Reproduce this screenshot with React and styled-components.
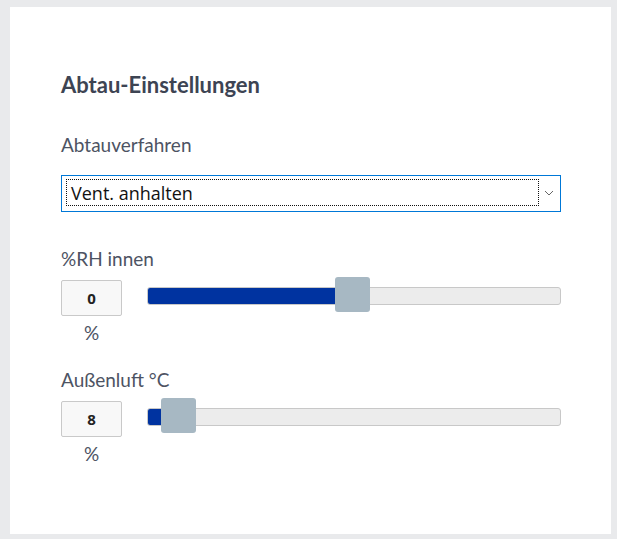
import styled, { createGlobalStyle } from "styled-components";

const GlobalStyle = createGlobalStyle`
  html, body {
    margin: 0;
    padding: 0;
    background: #e9eaec;
  }
  body {
    font-family: "Lato", "Noto Sans", sans-serif;
  }
`;

const Page = styled.div`
  width: 617px;
  height: 539px;
  padding: 7px 6px 5px 10px;
  box-sizing: border-box;
`;

const Card = styled.section`
  height: 100%;
  background: #fff;
  padding: 64px 50px 0 51px;
  box-sizing: border-box;
`;

const Title = styled.h2`
  margin: 0 0 35px;
  font-family: "Lato", sans-serif;
  font-size: 22px;
  line-height: 28px;
  font-weight: 700;
  color: #3d4453;
`;

const Label = styled.div`
  font-size: 19px;
  line-height: 22px;
  color: #4d5363;
  margin-bottom: ${(p) => p.gap || 8}px;
`;

const SelectBox = styled.div`
  display: flex;
  align-items: center;
  height: 37px;
  border: 1px solid #0078d7;
  padding: 3px 1px 5px 4px;
  box-sizing: border-box;
  margin-bottom: 36px;
`;

const FocusRing = styled.div`
  flex: 1;
  height: 100%;
  border: 1px dotted #111;
  box-sizing: border-box;
  display: flex;
  align-items: center;
  padding-left: 4px;
  font-family: "Open Sans", sans-serif;
  font-size: 18px;
  color: #111;
`;

const Chevron = styled.span`
  width: 20px;
  display: flex;
  justify-content: center;
  svg {
    display: block;
  }
`;

const Group = styled.div`
  margin-bottom: 25px;
`;

const Row = styled.div`
  display: flex;
  align-items: flex-start;
  gap: 25px;
`;

const ValueCol = styled.div`
  width: 61px;
  display: flex;
  flex-direction: column;
  align-items: center;
`;

const ValueBox = styled.div`
  width: 61px;
  height: 36px;
  box-sizing: border-box;
  border: 1px solid #c9c9c9;
  border-radius: 2px;
  background: #f8f8f8;
  display: flex;
  align-items: center;
  justify-content: center;
  font-family: "Open Sans", sans-serif;
  font-weight: 700;
  font-size: 15px;
  color: #222;
`;

const Unit = styled.div`
  margin-top: 6px;
  font-size: 19px;
  line-height: 22px;
  color: #4d5363;
`;

const Slider = styled.div`
  position: relative;
  flex: 1;
  height: 35px;
  margin-top: -3px;
`;

const Track = styled.div`
  position: absolute;
  left: 0;
  right: 0;
  top: 10px;
  height: 18px;
  box-sizing: border-box;
  border: 1px solid #c8c8c8;
  border-radius: 3px;
  background: #ececec;
  overflow: hidden;
`;

const Fill = styled.div`
  height: 100%;
  background: #0033a0;
`;

const Thumb = styled.div`
  position: absolute;
  top: 0;
  width: 35px;
  height: 35px;
  border-radius: 3px;
  background: #a7b8c3;
`;

const SliderField = ({ label, value, pos }) => (
  <Group>
    <Label gap={10}>{label}</Label>
    <Row>
      <ValueCol>
        <ValueBox>{value}</ValueBox>
        <Unit>%</Unit>
      </ValueCol>
      <Slider>
        <Track>
          <Fill style={{ width: `calc((100% - 35px) * ${pos} + 2px)` }} />
        </Track>
        <Thumb style={{ left: `calc((100% - 35px) * ${pos})` }} />
      </Slider>
    </Row>
  </Group>
);

const App = () => {
  return (
    <Page>
      <GlobalStyle />
      <Card>
        <Title>Abtau-Einstellungen</Title>
        <Label gap={19}>Abtauverfahren</Label>
        <SelectBox>
          <FocusRing>Vent. anhalten</FocusRing>
          <Chevron>
            <svg width="10" height="6" viewBox="0 0 10 6">
              <path d="M1 1l4 4 4-4" fill="none" stroke="#666" strokeWidth="1" />
            </svg>
          </Chevron>
        </SelectBox>
        <SliderField label="%RH innen" value="0" pos={0.497} />
        <SliderField label="Außenluft °C" value="8" pos={0.037} />
      </Card>
    </Page>
  );
};

export default App;
